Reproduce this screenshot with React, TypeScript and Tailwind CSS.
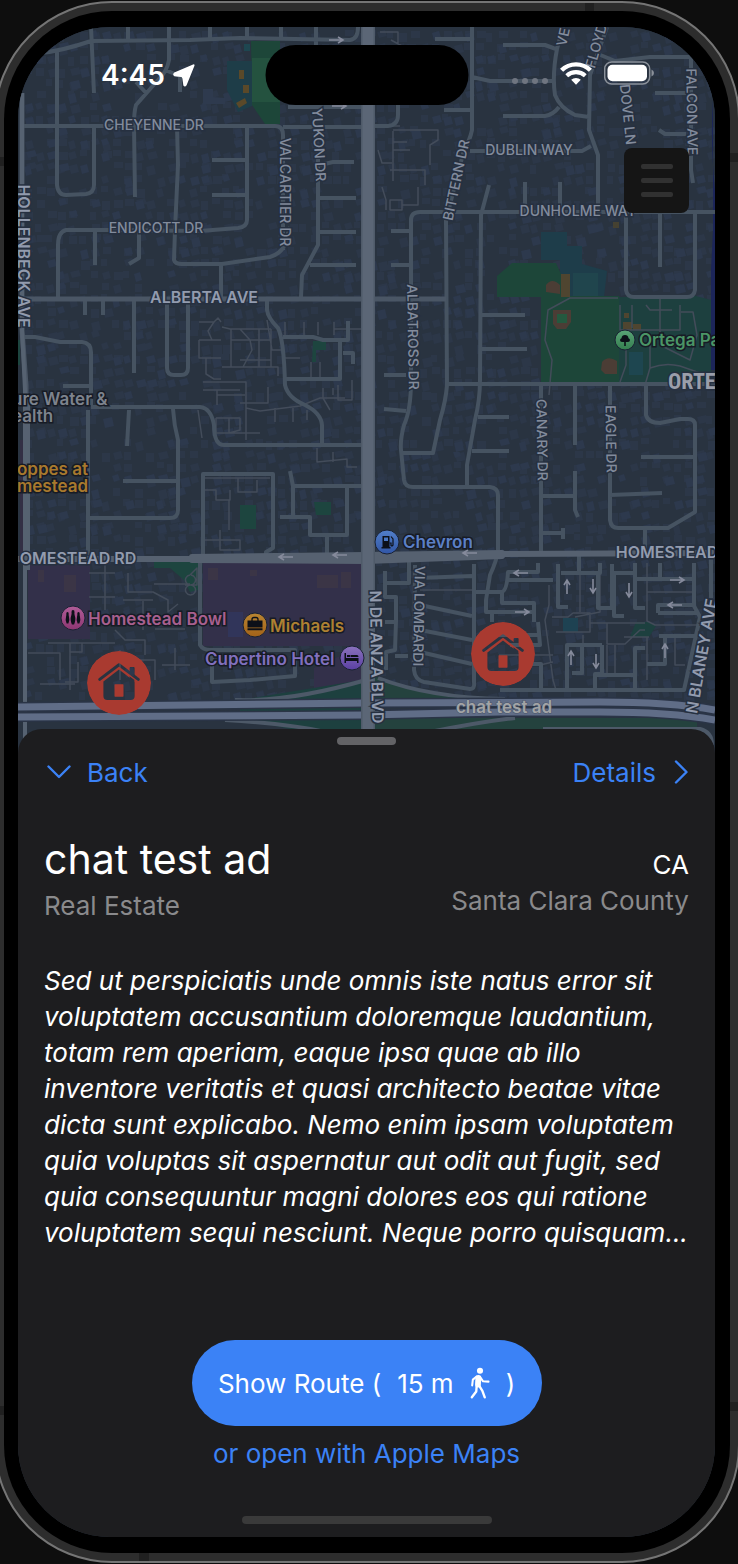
import React from "react";

const sans = "font-['Inter','Liberation_Sans',sans-serif]";

/* ---------- Map data ---------- */

function footprints(seed: number, keep: number) {
  let s = seed;
  const rnd = () => {
    s = (s * 16807) % 2147483647;
    return s / 2147483647;
  };
  let d = "";
  for (let y = 30; y < 700; y += 12) {
    for (let x = 24; x < 715; x += 11) {
      const a = rnd();
      const b = rnd();
      const c = rnd();
      if (a > keep) continue;
      const w = Math.round(6 + b * 3);
      const h = Math.round(6 + c * 3);
      const px = Math.round(x + b * 2);
      const py = Math.round(y + c * 3);
      const skew = a * 10 > 3 ? 0 : 2;
      d += `M${px} ${py + skew}l${w} ${-skew}l${skew} ${h}l${-w} ${skew}z`;
    }
  }
  return d;
}

const buildingsA = footprints(71, 0.62);
const buildingsB = footprints(913, 0.2);

const streets = [
  "M40 53Q62 51 91 41L190 40L240 38L350 40Q358 39 358 27",
  "M91 27L94 93M128 27V39M210 27V39M247 27V38M281 27V38M316 27V107",
  "M169 27V60Q167 72 158 80L136 105Q134 112 134 125L135 197",
  "M165 70L180 76V92M136 82L147 94",
  "M57 52V185Q58 195 66 195L86 194Q94 193 94 185V126",
  "M22 126H275Q283 126 283 135V250M283 127H366",
  "M177 126L178 165L175 230L174 260Q175 264 182 264H222L270 257Q280 254 284 246L290 227M221 264V297",
  "M247 126V220Q247 227 238 228L200 231L110 230H66Q58 232 58 245V298",
  "M212 160H247M212 195H247M95 230V265M139 232V258L129 264",
  "M318 150V245L302 275L301 297M310 265H356M318 198H356M318 232H356M320 165L333 162H354M288 107H366",
  "M85 299V315M103 299V315M134 299V373M167 303V368Q167 375 174 375H181Q188 375 188 368V303",
  "M22 337H35L60 342H82Q91 343 91 352V405M63 386H91",
  "M91 407H200Q211 408 214 425Q214 445 224 445H366",
  "M88 410V555M129 410L127 446M173 409Q174 425 178 440V510Q178 518 170 518H88M123 481H178",
  "M267 300V310Q268 318 278 328Q284 340 285 385Q288 398 305 405Q321 413 322 425V445",
  "M283 337H313L323 340H348V321M340 340V379H285M343 353H353V364",
  "M203 560V474H273V548L266 552V556M290 471L293 486H366M347 486V535H310V517H280M293 486V517M327 535V553",
  "M200 562V645Q203 650 210 650H295V676L250 680L212 682V650",
  "M472 27V130Q470 140 464 150L446 220L447 385Q446 400 440 420L433 453H402",
  "M435 39H472M472 77L490 81H553M444 110H472M503 45H545L556 49M503 116H545Q553 115 559 107",
  "M563 27L557 49Q552 75 555 95Q560 108 575 115L589 117",
  "M607 27L590 75L589 130L598 155V210M598 54L615 61L650 57H691V170L693 183",
  "M470 151H582L591 146M655 93H686M659 130L665 134H686",
  "M411 380V220Q411 212 420 212H715M489 185L481 215L480 380Q480 400 475 420L467 465V487",
  "M525 182V212M560 182V212M660 212V267M626 212V290Q627 297 634 297H687Q694 297 695 290V212",
  "M411 380Q411 410 404 425Q400 440 401 450L404 480Q405 487 413 487H490Q498 488 498 495V550Q497 560 490 575L486 600V612H535",
  "M447 384H715M481 315H525M481 349H527M391 231H411M391 265H411M384 375H406M384 409L406 411M478 417H509M472 451H509",
  "M373 115V126H388Q398 125 398 115V105",
  "M541 384V553M575 384V445M610 384V520Q611 528 618 528H668L695 512V425Q695 419 688 419H680L660 423Q648 423 646 415V384",
  "M641 457H695M575 471V510L578 517M541 496H575M610 495L662 493M645 528V553M541 533H563M563 528V539",
  "M385 571V597H396V622H385M385 583H409V560M396 622L395 650L386 652V670M395 656H408",
  "M415 565L414 670Q415 680 424 682L470 689Q475 689 474 682V564",
  "M418 578L472 576M420 605L472 616M420 630L472 640M420 652L472 664M474 592H502",
  "M502 592Q507 590 508 572H538V563M508 580H553M502 592V603H534V622M486 612H510M538 622L540 645H510",
  "M558 564V607H568M561 573H600V563M598 573V608H612V564M579 553V573M614 573H635V563M614 573V616H624M635 573V608H645",
  "M637 579H694V606L700 617L684 690H500M660 563V579M658 613V605H694M658 613H697M694 563V579",
  "M567 692V645H582V673H572M602 645H582M602 645V674H595V690M595 675H635V648H645M635 675V690M659 636H697M665 636V664H647",
  "M711 559V598",
  "M492 612V622M492 635H540M520 664H541V690",
];

const paths = [
  "M199 322H214L218 318L221 322M214 322L208 331L212 340M199 340H221M199 340V358H221M206 358V374L214 379H221",
  "M222 327L230 329H271M231 329V367M231 340H271M271 329V367M240 329L250 340L252 350L243 367M222 367H278V376M259 329V367M240 360H271M267 320L272 350H283",
  "M203 382H246V440M203 390H240M217 390V405M240 403H268V387M217 395H245M246 408L260 411L300 406L320 398H345M275 408V422M293 408V422M307 410V420",
  "M198 410L202 438M216 418H240M216 418V433H260M229 418V433L240 430V418M323 388V398L330 410M333 395V388M352 380V400H338V385",
  "M285 322V335M304 322V335M318 322V335M334 322V335M334 329H366M311 362V377M320 362V377M285 358H300",
  "M317 448V462L347 459V467H357M333 452V462M205 478H270M238 478V492H257V480M205 490H216V500H230V490M229 500V530M205 540H240V550H220V530",
  "M89 573H115M105 562V610M89 597H115M128 573V592H153L168 600V612L178 604M154 584H190M123 600H153M143 601V630M115 630L125 640H145V655M155 629H185",
  "M28 653H60V680M48 643H115M70 643V690M82 643V652H70M78 662V682H65M40 684H75M120 650V680M135 660H155V680M162 665H190M175 648V670",
  "M380 32H398V45M391 40L402 46M370 126H400M393 131V181M393 142H407M393 150H410M393 130H438V140L430 145V165M390 170H425V185M378 150L382 163H392",
  "M382 187L386 200V210M390 200H402V210H390zM402 205H418V187",
  "M549 395L552 360L545 340L548 310L570 298H618M620 305V330H680V305M632 305V328M646 305L650 310H672M660 297V335M681 312H693L697 335L690 360L660 345",
  "M626 345V365L620 382M650 345V368Q665 362 680 366L700 373M645 385L650 368M600 565V612L575 617",
  "M580 565V612M549 585V605L545 620L553 680L556 690M552 617H568L573 613H590V632H556M590 623H645M607 623V644H625L640 630H645M624 637H649",
  "M583 635V675M607 645V675M615 645V675M647 563V621L655 625H697M647 592H692M647 637V680M675 637V665H685",
  "M499 655H553M540 665L553 662M420 590H472",
  "M185 585H197V568L190 575M190 575A5 5 0 1 0 191 575M190 585A5 5 0 1 0 191 585",
];

const sidewalkParcels = "M20 440H26V560H20z";

type Label = { t: string; x: number; y: number; r?: number };

const roadLabels: Label[] = [
  { t: "CHEYENNE DR", x: 154, y: 130 },
  { t: "ENDICOTT DR", x: 156, y: 233 },
  { t: "DUBLIN WAY", x: 529, y: 155 },
  { t: "DUNHOLME WAY", x: 578, y: 216 },
  { t: "YUKON DR", x: 314, y: 145, r: 87 },
  { t: "VALCARTIER DR", x: 280, y: 192, r: 90 },
  { t: "BITTERN DR", x: 461, y: 181, r: -78 },
  { t: "ALBATROSS DR", x: 408, y: 337, r: 89 },
  { t: "CANARY DR", x: 537, y: 440, r: 89 },
  { t: "EAGLE DR", x: 606, y: 439, r: 89 },
  { t: "FALCON AVE", x: 687, y: 112, r: 89 },
  { t: "DOVE LN", x: 623, y: 115, r: 84 },
  { t: "VE", x: 568, y: 38, r: -78 },
  { t: "FLOYD", x: 601, y: 47, r: -74 },
  { t: "VIA LOMBARDI", x: 414, y: 616, r: 91 },
];

const mainLabels: Label[] = [
  { t: "ALBERTA AVE", x: 204, y: 303 },
  { t: "OMESTEAD RD", x: 78, y: 564 },
  { t: "HOMESTEAD", x: 667, y: 558 },
  { t: "HOLLENBECK AVE", x: 18, y: 256, r: 90 },
  { t: "N DE ANZA BLVD", x: 371, y: 657, r: 89 },
  { t: "N BLANEY AVE", x: 707, y: 657, r: -80 },
];

function MapText({ items, cls }: { items: Label[]; cls: string }) {
  return (
    <>
      {items.map((l) => (
        <text
          key={l.t}
          x={l.x}
          y={l.y}
          textAnchor="middle"
          transform={l.r ? `rotate(${l.r} ${l.x} ${l.y})` : undefined}
          className={cls}
        >
          {l.t}
        </text>
      ))}
    </>
  );
}

const arrows: [number, number, number][] = [
  [336, 40, 0],
  [339, 106, 0],
  [286, 557, 180],
  [340, 555, 180],
  [470, 553, 180],
  [521, 573, 180],
  [522, 612, 0],
  [677, 580, 0],
  [675, 605, 180],
  [567, 587, -90],
  [593, 586, 90],
  [629, 590, 90],
  [571, 658, -90],
  [596, 661, 90],
  [665, 651, -90],
];

function House({ x, y, id }: { x: number; y: number; id: string }) {
  return (
    <g transform={`translate(${x} ${y})`}>
      <mask id={id}>
        <circle r="32" fill="#fff" />
        <rect x="10.600" y="-16" width="5" height="14" rx="1" fill="#000" />
        <path
          d="M0 -13.500L15.600 -1.500V13Q15.600 17 11.600 17H-11.600Q-15.600 17 -15.600 13V-1.500z"
          fill="#000"
        />
        <path
          d="M-19 -1.600L0 -16L19 -1.600"
          fill="none"
          stroke="#fff"
          strokeWidth="2"
        />
        <path
          d="M-19.300 -3.600L0 -18.200L19.300 -3.600"
          fill="none"
          stroke="#000"
          strokeWidth="3"
          strokeLinecap="round"
          strokeLinejoin="round"
        />
        <rect x="-4.500" y="1.200" width="9" height="12.500" rx="0.600" fill="#fff" />
      </mask>
      <circle r="32" fill="#a93a30" mask={`url(#${id})`} />
    </g>
  );
}

function CityMap() {
  return (
    <svg
      viewBox="18 27 697 730"
      preserveAspectRatio="xMidYMin slice"
      className="absolute inset-x-0 top-0 h-[730px] w-full"
      role="img"
      aria-label="Neighborhood map"
    >
      <defs>
        <linearGradient id="pinPink" x2="0" y2="1">
          <stop stopColor="#b05d98" />
          <stop offset="1" stopColor="#8d3672" />
        </linearGradient>
        <linearGradient id="pinOrange" x2="0" y2="1">
          <stop stopColor="#b98532" />
          <stop offset="1" stopColor="#a36218" />
        </linearGradient>
        <linearGradient id="pinPurple" x2="0" y2="1">
          <stop stopColor="#8a72bd" />
          <stop offset="1" stopColor="#5b40a3" />
        </linearGradient>
        <linearGradient id="pinBlue" x2="0" y2="1">
          <stop stopColor="#527fc9" />
          <stop offset="1" stopColor="#3156a6" />
        </linearGradient>
        <linearGradient id="pinGreen" x2="0" y2="1">
          <stop stopColor="#5aa477" />
          <stop offset="1" stopColor="#347e4f" />
        </linearGradient>
      </defs>

      <rect x="18" y="27" width="697" height="730" fill="#293340" />
      <path d={buildingsA} fill="#2c3748" />
      <path d={buildingsB} fill="#2d394d" />
      <path d={sidewalkParcels} fill="#332f45" />

      {/* School and field, north */}
      <path d="M251 41H280V124H265L252 105z" fill="#1d4639" />
      <path d="M252 58H280V102H252z" fill="#24523f" />
      <path d="M227 61H252V106L238 112L227 90z" fill="#1e3d48" />
      <path d="M244 44H250V51H244z" fill="#1e4650" />
      <path d="M239 70H244V79H239zM243 85H249V93H243zM236 103L245 98L247 103L239 108z" fill="#5a4929" />
      <path d="M203 89H213V97L225 98V104H203z" fill="#2e3a4e" />

      {/* Ortega Park */}
      <path d="M541 232H567V246H582V264L607 271L604 297H560V260H541z" fill="#1e3d4a" />
      <path d="M573 273H598V297H573z" fill="#20454d" />
      <path d="M497 297V276L512 263H556L561 274V297z" fill="#1d4639" />
      <path d="M541 296H619V384H541z" fill="#1d4639" />
      <path d="M619 297H634L692 295L711 300V384H619z" fill="#1d403f" />
      <path d="M553 310H571V322L566 329H557L553 324z" fill="#4b3d35" />
      <rect x="557" y="314" width="10" height="9" fill="#24593f" />
      <path d="M546 285Q552 277 560 285V294L546 292zM602 362Q608 355 617 361V374H605L601 370z" fill="#4b3d35" />
      <path d="M561 274H570V297H561zM623 322H632V330H623zM633 324H641V330H633zM624 313H629V318H624z" fill="#4f4530" />
      <path d="M629 352H643V375H629z" fill="#1e4650" />
      <rect x="613" y="222" width="6" height="6" fill="#454131" />

      {/* Retail and hotel parcels */}
      <path d="M28 565H90V639H28z" fill="#33304a" />
      <path d="M203 563H363V646H203z" fill="#33304a" />
      <path d="M314 668L362 646V680L314 690z" fill="#33304a" />
      <path d="M38 570H44V582H38zM64 575H76V592H64zM208 568H218V580H208zM317 575H338V588H317zM341 572H351V588H341zM250 570H257V576H250z" fill="#3b3546" />
      <path d="M228 612H243V637H228z" fill="#31355a" />

      {/* Green patches */}
      <path d="M154 562H198V590L190 592L184 580L170 568H154z" fill="#1d453f" />
      <path d="M240 505H256V529H240zM314 502H331V515H316zM313 341H326V350H316V362H312z" fill="#1d453f" />
      <path d="M18 340H20V365H18z" fill="#1d453f" />
      <path d="M636 622H648L656 626L649 637H630z" fill="#1d403f" />
      <path d="M563 618H578V632H563z" fill="#1e4252" />
      <path d="M240 700L362 680V735H320L240 719z" fill="#1d403f" />
      <path d="M374 676L420 690L500 700V704H374zM374 718H697V735H374z" fill="#24423e" />
      <path d="M713 100Q710 140 715 190V370H711V270L713 230z" fill="#1c2559" />

      {/* Roads */}
      <path d={paths.join("")} fill="none" stroke="#434c5a" strokeWidth="1.500" strokeLinejoin="round" />
      <path
        d={streets.join("")}
        fill="none"
        stroke="#465361"
        strokeWidth="4"
        strokeLinejoin="round"
      />
      <path
        d="M366 680Q290 702 235 700M225 720Q290 724 325 732M378 678Q430 698 505 699M430 732Q480 722 515 718M543 729H700Q712 732 712 745"
        fill="none"
        stroke="#4d5968"
        strokeWidth="4"
      />
      <path
        d="M22 299H446M22 93V330L26 385V560"
        fill="none"
        stroke="#4a5665"
        strokeWidth="5"
      />
      <path d="M22 93V330L25 390V740M28 400V570" fill="none" stroke="#566271" strokeWidth="4" />
      <path
        d="M18 559H200M192 557L366 555L502 553M192 560L366 561L502 556M500 554L715 553"
        fill="none"
        stroke="#566170"
        strokeWidth="6"
        strokeLinecap="round"
      />
      <path
        d="M18 707L366 703L600 702Q670 702 715 710M18 717L366 715L500 712H600Q670 712 715 720"
        fill="none"
        stroke="#2a3446"
        strokeWidth="10"
      />
      <path
        d="M18 707L366 703L600 702Q670 702 715 710M18 717L366 715L500 712H600Q670 712 715 720"
        fill="none"
        stroke="#606d87"
        strokeWidth="7"
      />
      <path d="M368 27V740" fill="none" stroke="#4f5a69" strokeWidth="14" />
      <path d="M368 27V740" fill="none" stroke="#5b6676" strokeWidth="11" />

      {arrows.map(([x, y, r]) => (
        <path
          key={`${x}-${y}`}
          d="M-7 0H6M2 -3L7 0L2 3"
          transform={`translate(${x} ${y}) rotate(${r})`}
          fill="none"
          stroke="#858a9b"
          strokeWidth="1.600"
        />
      ))}

      <MapText
        items={roadLabels}
        cls="fill-[#828b9c] stroke-[#263040] stroke-[3px] text-[14px] font-medium [paint-order:stroke]"
      />
      <MapText
        items={mainLabels}
        cls="fill-[#929bae] stroke-[#263040] stroke-[3px] text-[16px] font-semibold [paint-order:stroke]"
      />
      <text
        x="668"
        y="389"
        className="fill-[#9a9eaa] stroke-[#263040] stroke-[3px] font-['Liberation_Sans_Narrow','Roboto_Condensed','Roboto',sans-serif] text-[22px] font-bold [paint-order:stroke]"
      >
        ORTE
      </text>

      <g className="stroke-[#171b25] stroke-[3px] text-[17px] font-semibold [paint-order:stroke]">
        <text x="12" y="405" className="fill-[#7d838d]">ure Water &amp;</text>
        <text x="12" y="422" className="fill-[#7d838d]">ealth</text>
        <text x="17" y="475" className="fill-[#a8792d]">oppes at</text>
        <text x="17" y="492" className="fill-[#a8792d]">mestead</text>
        <text x="88" y="625" className="fill-[#a8608f]">Homestead Bowl</text>
        <text x="270" y="632" className="fill-[#ae8132]">Michaels</text>
        <text x="205" y="665" className="fill-[#8170bd]">Cupertino Hotel</text>
        <text x="403" y="548" className="fill-[#5c80c6]">Chevron</text>
        <text x="639" y="346" className="fill-[#4b9566]">Ortega Park</text>
      </g>

      {/* Place pins */}
      <g stroke="#1a2233" strokeWidth="1">
        <circle cx="73" cy="618" r="12" fill="url(#pinPink)" />
        <circle cx="255" cy="625" r="12" fill="url(#pinOrange)" />
        <circle cx="352" cy="658" r="12" fill="url(#pinPurple)" />
        <circle cx="387" cy="542" r="12" fill="url(#pinBlue)" />
        <circle cx="625" cy="340" r="10" fill="url(#pinGreen)" />
      </g>
      <g fill="#0c1018">
        <path d="M73 610q1.700 0 1.500 2.200q-.3 1.500 .2 3q1.500 4.500 -.6 9.300h-2.200q-2.100-4.800-.6-9.300q.5-1.500 .2-3q-.2-2.200 1.500-2.200z" />
        <path d="M67.500 612q1.300 0 1.200 1.800q-.2 1.200 .2 2.400q1.100 3.600-.5 7.300h-1.800q-1.600-3.700-.5-7.300q.4-1.200 .2-2.400q-.1-1.800 1.200-1.800zM78.500 612q1.300 0 1.200 1.800q-.2 1.200 .2 2.400q1.100 3.600-.5 7.300h-1.800q-1.600-3.700-.5-7.300q.4-1.200 .2-2.400q-.1-1.800 1.200-1.800z" />
        <path d="M247.500 620.500h15v7h-15zM247.500 628.300h15v2h-15z" />
        <path d="M252 621v-1.500q0-2 2-2h2q2 0 2 2v1.500" fill="none" stroke="#0c1018" strokeWidth="1.300" />
        <path d="M344.500 653h1.500v5h12.500v5h-1.500v-2h-11v2h-1.500zM347 655h3.500v2h-3.500zM351 655h6q1.500 0 1.500 2h-7.500z" />
        <path d="M382.500 536h7v11h-7zM381.500 547h9v1.500h-9z" />
        <path d="M384 537.500h4v3.500h-4z" fill="#4a77c2" />
        <path d="M389.500 543h1.500v2.500q1.500 1 2-.5v-6l-2-2.500" fill="none" stroke="#0c1018" strokeWidth="1.200" />
        <path d="M624.200 346v-4q-4 .6-4.200-1.800q0-1.700 1.500-2q.4-3.200 3.500-3.200t3.500 3.200q1.500 .3 1.500 2q-.2 2.400-4.200 1.800v4z" />
      </g>

      <House x={119} y={683} id="houseWest" />
      <House x={503} y={654} id="houseEast" />
      <text x="504" y="713" textAnchor="middle" className="fill-[#a2a4a6] stroke-[#4b5567] stroke-[1px] text-[17px] font-semibold [paint-order:stroke]">
        chat test ad
      </text>
    </svg>
  );
}

/* ---------- Status bar ---------- */

function StatusBar() {
  return (
    <div className="relative flex h-[96px] items-center justify-between pr-[61px] pl-[83px]">
      <div className="flex items-center gap-2 text-[28px] leading-none font-semibold text-white">
        4:45
        <svg viewBox="0 0 68 70" className="h-[23px] w-[22px]" fill="#fff" aria-label="Location in use">
          <path d="M62 1Q68 -1 66 6L42 65Q37 72 32 66L29 44Q28 40 25 40L4 37Q-3 32 4 26z" />
        </svg>
      </div>
      <div className="absolute top-[18px] left-1/2 h-[60px] w-[203px] -translate-x-1/2 rounded-full bg-black" />
      <div className="flex items-center">
        <div className="mt-3 mr-3 flex gap-1" aria-label="No signal">
          <span className="size-[6px] rounded-full bg-[#6f7580]" />
          <span className="size-[6px] rounded-full bg-[#6f7580]" />
          <span className="size-[6px] rounded-full bg-[#6f7580]" />
          <span className="size-[6px] rounded-full bg-[#6f7580]" />
        </div>
        <svg viewBox="0 0 92 70" className="mr-3 mb-1 h-[24px] w-[32px]" fill="none" stroke="#fff" aria-label="Wi-Fi">
          <path d="M4 27A60 60 0 0 1 88 27" strokeWidth="13" />
          <path d="M19 43A40 40 0 0 1 73 43" strokeWidth="12" />
          <path d="M46 69L32 55A20 20 0 0 1 60 55z" fill="#fff" stroke="none" />
        </svg>
        <svg viewBox="0 0 50 24" className="mb-1 h-[24px] w-[50px]" aria-label="Battery full">
          <rect x="0.700" y="1" width="45" height="22" rx="7" fill="none" stroke="#8b919a" strokeWidth="1.500" />
          <rect x="3.500" y="3.700" width="39.500" height="16.600" rx="5" fill="#fff" />
          <path d="M47.500 8.500q2.500 1 2.500 3.500t-2.500 3.500z" fill="#8b919a" />
        </svg>
      </div>
    </div>
  );
}

function Walker() {
  return (
    <svg
      viewBox="0 0 58 94"
      className="h-[32px] w-[20px]"
      fill="none"
      stroke="#fff"
      strokeLinecap="round"
      strokeLinejoin="round"
      aria-label="walking"
    >
      <circle cx="29" cy="11" r="9" fill="#fff" stroke="none" />
      <path d="M24 32L23 52" strokeWidth="17" />
      <path d="M29 29L38 42L54 43" strokeWidth="6" />
      <path d="M19 28L8 37L6 54" strokeWidth="6" />
      <path d="M26 54L36 70L43 89" strokeWidth="7" />
      <path d="M19 58L18 72L5 89" strokeWidth="7" />
    </svg>
  );
}

/* ---------- Sheet ---------- */

const description = [
  "Sed ut perspiciatis unde omnis iste natus error sit",
  "voluptatem accusantium doloremque laudantium,",
  "totam rem aperiam, eaque ipsa quae ab illo",
  "inventore veritatis et quasi architecto beatae vitae",
  "dicta sunt explicabo. Nemo enim ipsam voluptatem",
  "quia voluptas sit aspernatur aut odit aut fugit, sed",
  "quia consequuntur magni dolores eos qui ratione",
  "voluptatem sequi nesciunt. Neque porro quisquam...",
];

function Sheet() {
  return (
    <section className="relative flex flex-1 flex-col rounded-t-[24px] bg-[#1d1d1f] px-[26px] pt-2 pb-[13px]">
      <div className="mx-auto h-2 w-[59px] rounded-full bg-[#636366]" />
      <nav className="mt-[9px] flex h-[36px] items-center justify-between text-[26px] text-[#3b82f6]">
        <button type="button" className="flex items-center gap-4 pl-[3px]">
          <svg viewBox="0 0 24 14" className="h-[14px] w-[24px]" fill="none" stroke="currentColor" strokeWidth="2.400" strokeLinecap="round" strokeLinejoin="round">
            <path d="M1.500 1.500L12 12L22.500 1.500" />
          </svg>
          Back
        </button>
        <a href="#details" className="flex items-center gap-4">
          Details
          <svg viewBox="0 0 17 24" className="h-[24px] w-[17px]" fill="none" stroke="currentColor" strokeWidth="2.400" strokeLinecap="round" strokeLinejoin="round">
            <path d="M4 1.500L14.500 12L4 22.500" />
          </svg>
        </a>
      </nav>

      <header className="mt-[41px] flex items-end justify-between">
        <div>
          <h1 className="text-[41px] leading-[57px] text-white">chat test ad</h1>
          <p className="text-[26px] leading-[36px] text-[#8a8a8c]">Real Estate</p>
        </div>
        <div className="pb-[5px] text-right text-[26px] leading-[36px]">
          <p className="text-white">CA</p>
          <p className="text-[#8a8a8c]">Santa Clara County</p>
        </div>
      </header>

      <p className="mt-[39px] text-[26px] leading-[36px] whitespace-nowrap text-white italic">
        {description.map((line) => (
          <span key={line} className="block">
            {line}
          </span>
        ))}
      </p>

      <div className="mt-auto flex flex-col items-center">
        <button
          type="button"
          className="flex h-[86px] w-[350px] items-center justify-center rounded-full bg-[#3b82f6] text-[26px] text-white"
        >
          Show Route (
          <span className="mx-4">15 m</span>
          <Walker />
          <span className="ml-4">)</span>
        </button>
        <a href="#maps" className="mt-2 text-[26px] leading-[40px] text-[#3b82f6]">
          or open with Apple Maps
        </a>
      </div>
      <div className="mx-auto mt-[42px] h-2 w-[250px] rounded-full bg-[#3a3a3a]" />
    </section>
  );
}

export default function App() {
  return (
    <main className={`${sans} flex min-h-screen flex-col overflow-hidden bg-[#0e0e0e] pt-px pb-px`}>
      <div className="relative -mr-[2px] -ml-[6px] flex flex-1 flex-col rounded-[118px] border-2 border-[#757575] bg-[#2d2d2d] p-2">
        <span className="absolute top-0 right-[144px] h-2 w-[9px] bg-[#202020]" />
        <span className="absolute top-[150px] right-0 h-[9px] w-2 bg-[#202020]" />
        <span className="absolute top-[154px] left-0 h-[9px] w-2 bg-[#202020]" />
        <span className="absolute right-0 bottom-[150px] h-[9px] w-2 bg-[#202020]" />
        <span className="absolute bottom-[146px] left-0 h-[9px] w-2 bg-[#202020]" />
        <span className="absolute bottom-0 left-[143px] h-2 w-[10px] bg-[#202020]" />
        <div className="flex flex-1 flex-col rounded-[108px] bg-black py-4 pr-[15px] pl-[14px]">
          <div className="relative flex flex-1 flex-col overflow-hidden rounded-[92px] bg-[#293340]">
            <CityMap />
            <div className="h-[702px]">
              <StatusBar />
              <div className="relative mt-[25px] flex justify-end pr-[26px]">
                <button
                  type="button"
                  aria-label="Menu"
                  className="flex size-[65px] flex-col items-center justify-center gap-[9px] rounded-[8px] bg-[#151515]"
                >
                  <span className="h-[5px] w-8 rounded-[2px] bg-[#313131]" />
                  <span className="h-[5px] w-8 rounded-[2px] bg-[#313131]" />
                  <span className="h-[5px] w-8 rounded-[2px] bg-[#313131]" />
                </button>
              </div>
            </div>
            <Sheet />
          </div>
        </div>
      </div>
    </main>
  );
}
